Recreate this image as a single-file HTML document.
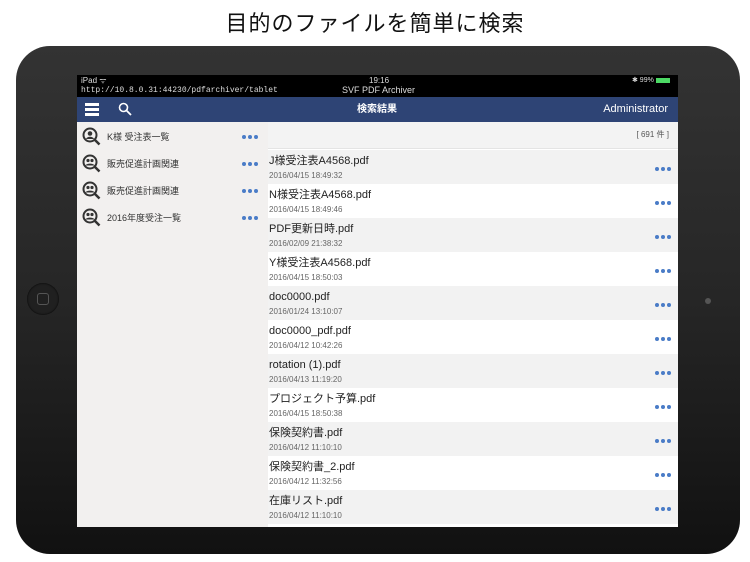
<!DOCTYPE html>
<html><head><meta charset="utf-8"><style>
*{margin:0;padding:0;box-sizing:border-box}
body{width:750px;height:562px;background:#fff;position:relative;overflow:hidden;font-family:"Liberation Sans","Noto Sans CJK JP",sans-serif}
.title{position:absolute;top:9px;left:0;width:750px;text-align:center;font-size:22px;line-height:30px;color:#111;letter-spacing:1px}
.frame{position:absolute;left:16px;top:46px;width:724px;height:508px;border-radius:34px;background:linear-gradient(180deg,#333 0%,#262626 50%,#111 100%)}
.home{position:absolute;left:11px;top:237px;width:32px;height:32px;border-radius:50%;background:#202020;box-shadow:inset 0 0 2px #000}
.home i{position:absolute;left:10px;top:10px;width:12px;height:12px;border:1px solid #555;border-radius:3px}
.cam{position:absolute;left:689px;top:252px;width:6px;height:6px;border-radius:50%;background:#555}
.screen{position:absolute;left:77px;top:75px;width:601px;height:452px;background:#fff;overflow:hidden}
.status{position:absolute;left:0;top:0;width:601px;height:22px;background:#000;color:#ddd;font-size:8px;line-height:1}
.nav{position:absolute;left:0;top:22px;width:601px;height:25px;background:#2e4475;color:#fff;line-height:1}
.side{position:absolute;left:0;top:47px;width:191px;height:405px;background:#f2f0ef}
.si{position:absolute;left:0;height:27px;width:191px;font-size:9px;color:#333;line-height:1}
.si .t{position:absolute;left:30px;top:11px}
.d{position:absolute;width:4px;height:4px;border-radius:50%;background:#4a7cc7}
.list{position:absolute;left:191px;top:47px;width:410px}
.row{position:absolute;left:0;width:410px;height:34px;line-height:1}
.row .n{position:absolute;left:1px;top:6px;font-size:11px;color:#222}
.row .dt{position:absolute;left:1px;top:22px;font-size:8px;color:#666}
</style></head><body>
<div class="title">目的のファイルを簡単に検索</div>
<div class="frame"><div class="home"><i></i></div><div class="cam"></div></div>
<div class="screen">
<div class="status">
<div style="position:absolute;left:4px;top:2px">iPad ᯤ</div>
<div style="position:absolute;left:4px;top:12px;font-family:'Liberation Mono',monospace;font-size:8px">http://10.8.0.31:44230/pdfarchiver/tablet</div>
<div style="position:absolute;left:292px;top:2px">19:16</div>
<div style="position:absolute;left:265px;top:11px;font-size:9px">SVF PDF Archiver</div>
<div style="position:absolute;left:555px;top:2px;font-size:7px">✱ 99%</div>
<div style="position:absolute;left:579px;top:3px;width:14px;height:5px;background:#4cd964"></div>
</div>
<div class="nav">
<div style="position:absolute;left:8px;top:6px;width:14px;height:2.5px;background:#fff;box-shadow:0 5px 0 #fff,0 10px 0 #fff"></div>
<svg style="position:absolute;left:41px;top:5px" width="14" height="14" viewBox="0 0 14 14"><circle cx="5.5" cy="5.5" r="4" fill="none" stroke="#fff" stroke-width="1.6"/><path d="M8.5 8.5L13 13" stroke="#fff" stroke-width="1.8"/></svg>
<div style="position:absolute;left:280px;top:8px;font-size:10px;font-weight:bold">検索結果</div>
<div style="position:absolute;right:10px;top:7px;font-size:11px">Administrator</div>
</div>
<div class="side">
<div class="si" style="top:0"><svg style="position:absolute;left:5px;top:5px" width="19" height="19" viewBox="0 0 19 19"><circle cx="8" cy="8" r="6.5" fill="none" stroke="#333" stroke-width="2"/><circle cx="8" cy="6.5" r="2.3" fill="#333"/><path d="M4 12c1-3 7-3 8 0" fill="#333"/><path d="M12.5 12.5L17.5 17.5" stroke="#333" stroke-width="2.5"/></svg><span class="t">K様 受注表一覧</span></div>
<div class="si" style="top:27px"><svg style="position:absolute;left:5px;top:5px" width="19" height="19" viewBox="0 0 19 19"><circle cx="8" cy="8" r="6.5" fill="none" stroke="#333" stroke-width="2"/><circle cx="6" cy="6.5" r="1.6" fill="#333"/><circle cx="10" cy="6.5" r="1.6" fill="#333"/><path d="M3.5 11.5c1-2.5 8-2.5 9 0" fill="#333"/><path d="M12.5 12.5L17.5 17.5" stroke="#333" stroke-width="2.5"/></svg><span class="t">販売促進計画関連</span></div>
<div class="si" style="top:54px"><svg style="position:absolute;left:5px;top:5px" width="19" height="19" viewBox="0 0 19 19"><circle cx="8" cy="8" r="6.5" fill="none" stroke="#333" stroke-width="2"/><circle cx="6" cy="6.5" r="1.6" fill="#333"/><circle cx="10" cy="6.5" r="1.6" fill="#333"/><path d="M3.5 11.5c1-2.5 8-2.5 9 0" fill="#333"/><path d="M12.5 12.5L17.5 17.5" stroke="#333" stroke-width="2.5"/></svg><span class="t">販売促進計画関連</span></div>
<div class="si" style="top:81px"><svg style="position:absolute;left:5px;top:5px" width="19" height="19" viewBox="0 0 19 19"><circle cx="8" cy="8" r="6.5" fill="none" stroke="#333" stroke-width="2"/><circle cx="6" cy="6.5" r="1.6" fill="#333"/><circle cx="10" cy="6.5" r="1.6" fill="#333"/><path d="M3.5 11.5c1-2.5 8-2.5 9 0" fill="#333"/><path d="M12.5 12.5L17.5 17.5" stroke="#333" stroke-width="2.5"/></svg><span class="t">2016年度受注一覧</span></div>
<div class="d" style="left:165px;top:13px;box-shadow:6px 0 #4a7cc7,12px 0 #4a7cc7"></div>
<div class="d" style="left:165px;top:40px;box-shadow:6px 0 #4a7cc7,12px 0 #4a7cc7"></div>
<div class="d" style="left:165px;top:67px;box-shadow:6px 0 #4a7cc7,12px 0 #4a7cc7"></div>
<div class="d" style="left:165px;top:94px;box-shadow:6px 0 #4a7cc7,12px 0 #4a7cc7"></div>
</div>
<div class="list">
<div style="position:absolute;left:0;top:0;width:410px;height:27px;background:#f3f3f3;border-bottom:1px solid #e4e4e4"><span style="position:absolute;right:9px;top:9px;font-size:8px;line-height:1;color:#555">[ 691 件 ]</span></div>
<div class="row" style="top:28px;background:#f2f2f2"><div class="n">J様受注表A4568.pdf</div><div class="dt">2016/04/15 18:49:32</div></div>
<div class="row" style="top:62px;background:#fff"><div class="n">N様受注表A4568.pdf</div><div class="dt">2016/04/15 18:49:46</div></div>
<div class="row" style="top:96px;background:#f2f2f2"><div class="n">PDF更新日時.pdf</div><div class="dt">2016/02/09 21:38:32</div></div>
<div class="row" style="top:130px;background:#fff"><div class="n">Y様受注表A4568.pdf</div><div class="dt">2016/04/15 18:50:03</div></div>
<div class="row" style="top:164px;background:#f2f2f2"><div class="n">doc0000.pdf</div><div class="dt">2016/01/24 13:10:07</div></div>
<div class="row" style="top:198px;background:#fff"><div class="n">doc0000_pdf.pdf</div><div class="dt">2016/04/12 10:42:26</div></div>
<div class="row" style="top:232px;background:#f2f2f2"><div class="n">rotation (1).pdf</div><div class="dt">2016/04/13 11:19:20</div></div>
<div class="row" style="top:266px;background:#fff"><div class="n">プロジェクト予算.pdf</div><div class="dt">2016/04/15 18:50:38</div></div>
<div class="row" style="top:300px;background:#f2f2f2"><div class="n">保険契約書.pdf</div><div class="dt">2016/04/12 11:10:10</div></div>
<div class="row" style="top:334px;background:#fff"><div class="n">保険契約書_2.pdf</div><div class="dt">2016/04/12 11:32:56</div></div>
<div class="row" style="top:368px;background:#f2f2f2"><div class="n">在庫リスト.pdf</div><div class="dt">2016/04/12 11:10:10</div></div>
<div class="d" style="left:387px;top:45px;box-shadow:6px 0 #4a7cc7,12px 0 #4a7cc7"></div>
<div class="d" style="left:387px;top:79px;box-shadow:6px 0 #4a7cc7,12px 0 #4a7cc7"></div>
<div class="d" style="left:387px;top:113px;box-shadow:6px 0 #4a7cc7,12px 0 #4a7cc7"></div>
<div class="d" style="left:387px;top:147px;box-shadow:6px 0 #4a7cc7,12px 0 #4a7cc7"></div>
<div class="d" style="left:387px;top:181px;box-shadow:6px 0 #4a7cc7,12px 0 #4a7cc7"></div>
<div class="d" style="left:387px;top:215px;box-shadow:6px 0 #4a7cc7,12px 0 #4a7cc7"></div>
<div class="d" style="left:387px;top:249px;box-shadow:6px 0 #4a7cc7,12px 0 #4a7cc7"></div>
<div class="d" style="left:387px;top:283px;box-shadow:6px 0 #4a7cc7,12px 0 #4a7cc7"></div>
<div class="d" style="left:387px;top:317px;box-shadow:6px 0 #4a7cc7,12px 0 #4a7cc7"></div>
<div class="d" style="left:387px;top:351px;box-shadow:6px 0 #4a7cc7,12px 0 #4a7cc7"></div>
<div class="d" style="left:387px;top:385px;box-shadow:6px 0 #4a7cc7,12px 0 #4a7cc7"></div>
</div>
</div>
</body></html>
